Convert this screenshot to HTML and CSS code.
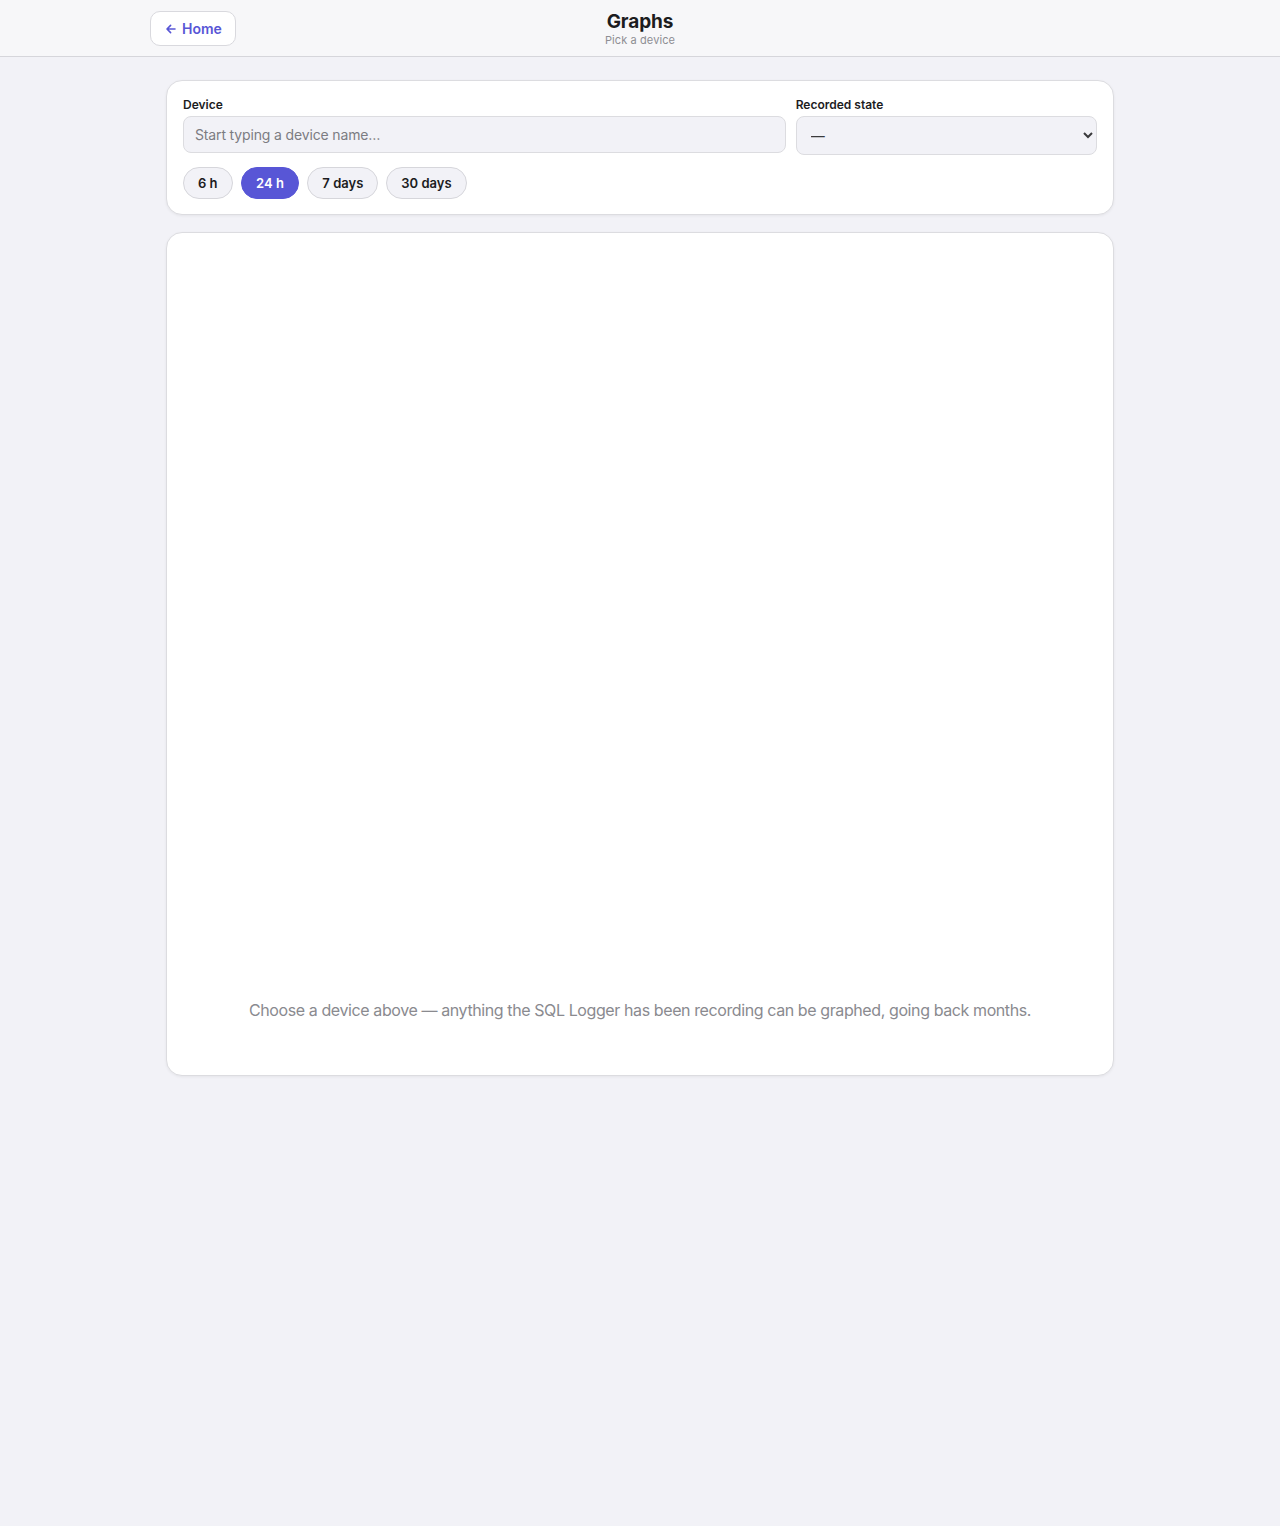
FILE: index.html
```html
<!DOCTYPE html>
<html lang="en">
<head>
<meta charset="utf-8">
<title>Graphs</title>
<link rel="stylesheet" href="styles.css">
</head>
<body>
<header class="topbar">
  <div class="topbar-inner">
    <div class="topbar-left">
      <a class="home-btn" href="#"><svg class="arrow" width="12" height="12" viewBox="0 0 12 12" fill="none" stroke="currentColor" stroke-width="1.6" stroke-linecap="round" stroke-linejoin="round"><path d="M10 6H2.2M5.6 2.4L2 6l3.6 3.6"/></svg>Home</a>
    </div>
    <div class="topbar-title">
      <div class="title">Graphs</div>
      <div class="subtitle">Pick a device</div>
    </div>
    <div class="topbar-right"></div>
  </div>
</header>
<main class="page">
  <section class="card controls">
    <div class="fields">
      <label class="field">
        <span class="label">Device</span>
        <input class="input" type="text" placeholder="Start typing a device name…">
      </label>
      <label class="field">
        <span class="label">Recorded state</span>
        <select class="select"><option>—</option></select>
      </label>
    </div>
    <div class="chips">
      <button class="chip">6 h</button>
      <button class="chip active">24 h</button>
      <button class="chip">7 days</button>
      <button class="chip">30 days</button>
    </div>
  </section>
  <section class="card chart">
    <p class="empty">Choose a device above — anything the SQL Logger has been recording can be graphed, going back months.</p>
  </section>
</main>
</body>
</html>
```

FILE: styles.css
```css
* { box-sizing: border-box; }
html, body { margin: 0; padding: 0; }
body {
  background: #f2f2f7;
  font-family: Inter, "Noto Sans", "Liberation Sans", sans-serif;
  color: #1c1c1e;
  min-height: 1526px;
}
.topbar {
  background: #f7f7f9;
  border-bottom: 1px solid #d6d6db;
  height: 57px;
}
.topbar-inner {
  max-width: 980px;
  margin: 0 auto;
  height: 56px;
  display: grid;
  grid-template-columns: 1fr auto 1fr;
  align-items: center;
}
.topbar-left { display: flex; align-items: center; }
.home-btn {
  display: inline-flex;
  align-items: center;
  gap: 5px;
  height: 35px;
  padding: 0 13px 0 14px;
  background: #fff;
  border: 1px solid #d9d9de;
  border-radius: 10px;
  color: #5856d6;
  font-size: 14px;
  font-weight: 600;
  text-decoration: none;
  margin-top: 1px;
}
.home-btn .arrow { display: block; }
.topbar-title { text-align: center; padding-top: 2px; }
.title {
  font-size: 19px;
  font-weight: 700;
  line-height: 22px;
  letter-spacing: -0.1px;
}
.subtitle {
  font-size: 11px;
  line-height: 14px;
  color: #8e8e93;
  letter-spacing: 0.1px;
}
.page {
  max-width: 980px;
  margin: 0 auto;
  padding: 23px 16px;
  display: flex;
  flex-direction: column;
  gap: 17px;
}
.card {
  background: #fff;
  border: 1px solid #dcdce0;
  border-radius: 16px;
  box-shadow: 0 1px 3px rgba(0, 0, 0, 0.06);
}
.controls { padding: 16px 16px 15px; height: 135px; }
.fields {
  display: grid;
  grid-template-columns: 2fr 1fr;
  gap: 10px;
}
.field { display: flex; flex-direction: column; }
.label {
  font-size: 12px;
  font-weight: 600;
  line-height: 15px;
  margin-bottom: 4px;
  margin-top: 0;
}
.input, .select {
  font-family: inherit;
  font-size: 14px;
  background: #f2f2f7;
  border: 1px solid #dcdce0;
  border-radius: 8px;
  color: #1c1c1e;
  outline: none;
}
.input {
  height: 37px;
  padding: 0 11px;
  letter-spacing: -0.15px;
}
.input::placeholder { color: #7c7c82; }
.select {
  height: 39px;
  padding: 0 12px 0 10px;
  color: #3a3a3c;
}
.chips {
  display: flex;
  gap: 8px;
  margin-top: 12px;
}
.chip {
  font-family: inherit;
  font-size: 13px;
  font-weight: 600;
  height: 32px;
  padding: 0 14px;
  border-radius: 16px;
  border: 1px solid #d6d6db;
  background: #f2f2f7;
  color: #1c1c1e;
  cursor: pointer;
}
.chip.active {
  background: #5856d6;
  border-color: #5856d6;
  color: #fff;
  padding: 0 14.5px;
}
.chart {
  height: 844px;
  display: flex;
  flex-direction: column;
  justify-content: flex-end;
  padding: 16px 16px 53px;
}
.empty {
  margin: 0;
  text-align: center;
  font-size: 16px;
  line-height: 24px;
  letter-spacing: -0.4px;
  color: #8a8a8f;
}
```
